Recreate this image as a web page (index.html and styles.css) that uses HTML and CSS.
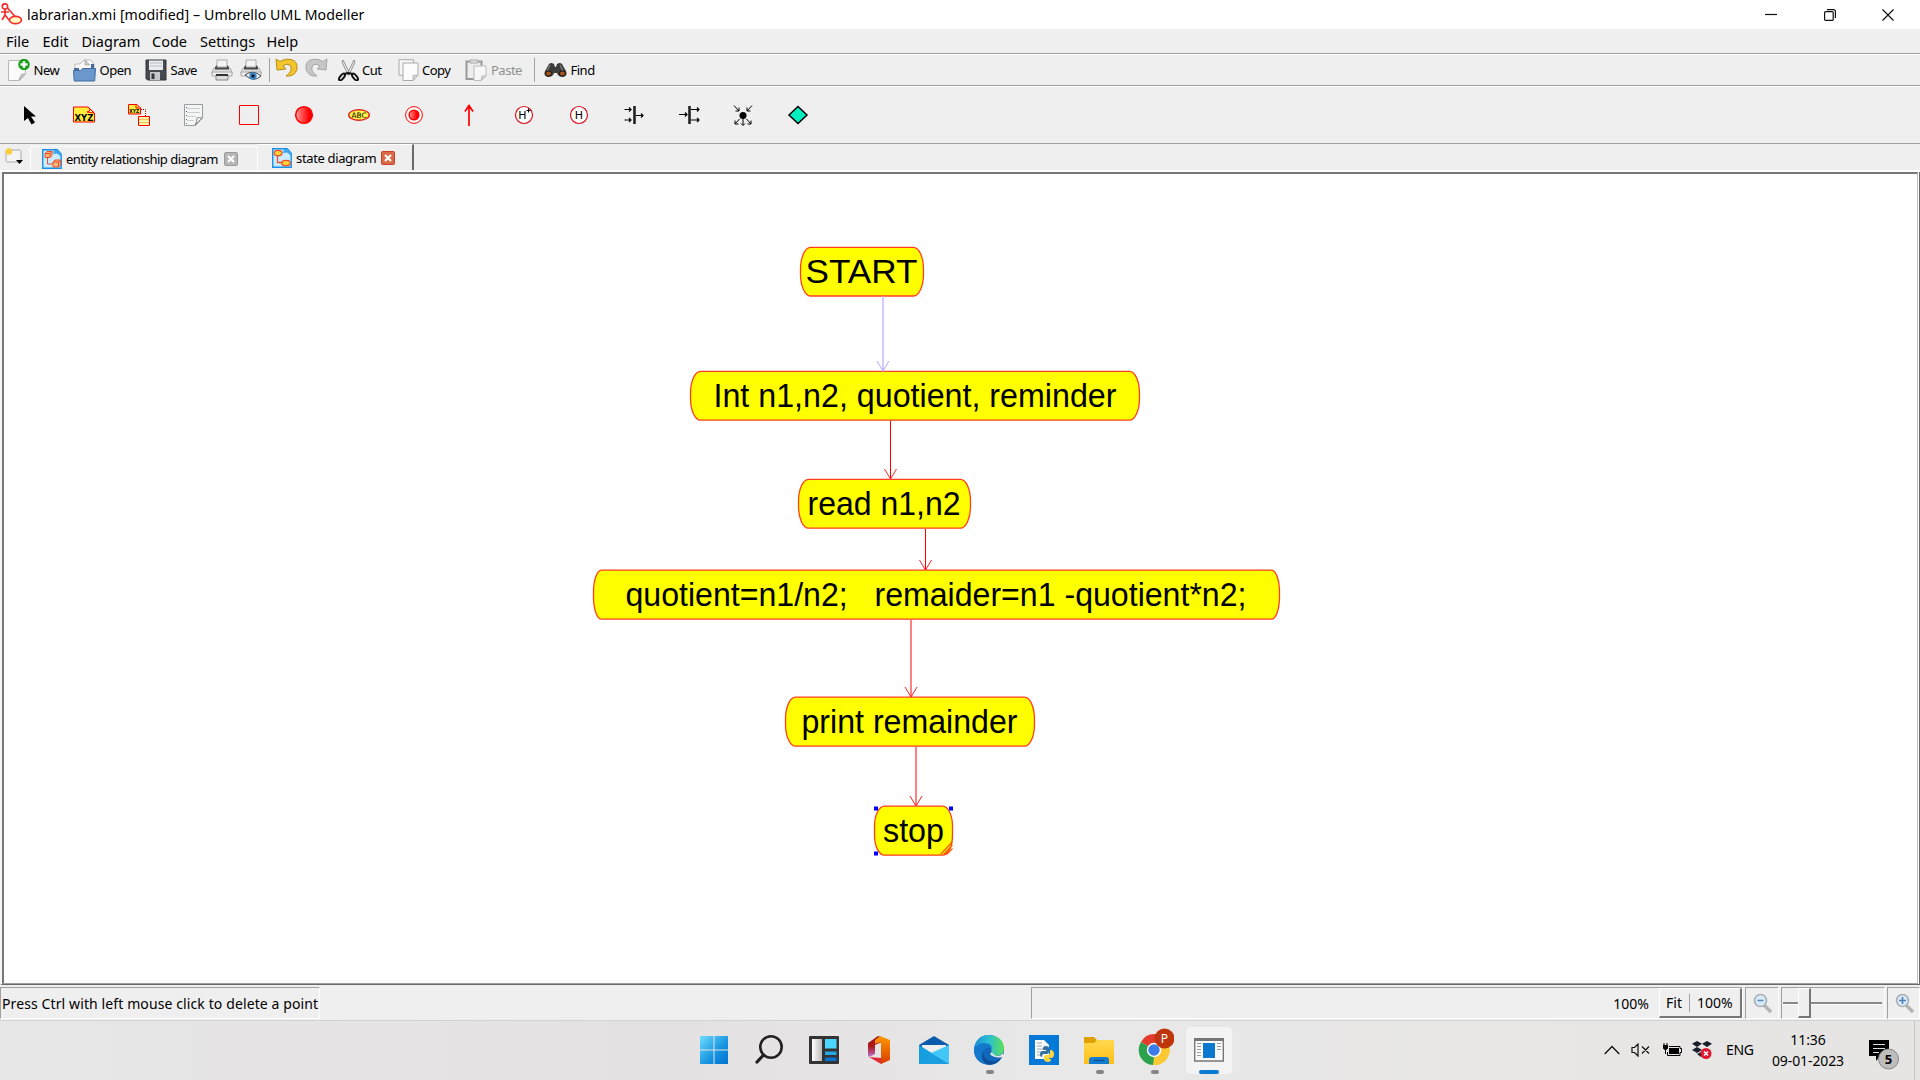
FILE: index.html
```html
<!DOCTYPE html>
<html lang="en">
<head>
<meta charset="utf-8">
<title>labrarian.xmi [modified] – Umbrello UML Modeller</title>
<link rel="stylesheet" href="styles.css">
</head>
<body>
<svg class="defs" width="0" height="0">
  <defs>
    <linearGradient id="redball" x1="0" x2="1"><stop offset="0" stop-color="#ffb0b0"/><stop offset=".25" stop-color="#ff6868"/><stop offset=".8" stop-color="#f00"/></linearGradient>
    <linearGradient id="win" x1="0" y1="0" x2="1" y2="1"><stop offset="0" stop-color="#6fdcff"/><stop offset=".6" stop-color="#1593e0"/><stop offset="1" stop-color="#0070cf"/></linearGradient>
    <linearGradient id="gold" x1="0" y1="0" x2="0" y2="1"><stop offset="0" stop-color="#ffd84d"/><stop offset="1" stop-color="#ffbf18"/></linearGradient>
    <linearGradient id="office" x1="0" y1="0" x2="0" y2="1"><stop offset="0" stop-color="#ff9a00"/><stop offset="1" stop-color="#d83b01"/></linearGradient>
    <linearGradient id="officeL" x1="0" y1="0" x2="0" y2="1"><stop offset="0" stop-color="#a61015"/><stop offset=".5" stop-color="#a81c1c"/><stop offset="1" stop-color="#c06fd0"/></linearGradient>
    <linearGradient id="edgeTop" x1="0" x2="1"><stop offset="0" stop-color="#1a8fd8"/><stop offset=".5" stop-color="#2cc0d0"/><stop offset="1" stop-color="#5fe055"/></linearGradient>
    <linearGradient id="panelW" x1="0" x2="1"><stop offset="0" stop-color="#fff"/><stop offset="1" stop-color="#bbb"/></linearGradient>
    <symbol id="diagramPage" viewBox="0 0 20 20"><path d="M.7.7h14.5l4 4.500v14H.7z" fill="#c9ebff" stroke="#1a8fe6" stroke-width="1.4"/><path d="M12 1l-1 4 4-.500 4 3V5l-3.500-4z" fill="#3ba7f2"/></symbol>
  </defs>
</svg>

<header class="titlebar">
  <svg class="app-icon" width="22" height="22" viewBox="0 0 22 22" fill="none" stroke="#f03030" stroke-width="1.7"><circle cx="4" cy="3.500" r="2.700"/><path d="M4 6v6L1 17M4 12l4 5M0 9h8M6.500 5l8 9"/><ellipse cx="14.500" cy="17" rx="6" ry="3.700" fill="#fffcc0"/></svg>
  <span class="title">labrarian.xmi [modified] – Umbrello UML Modeller</span>
  <div class="controls">
    <svg width="12" height="12"><path d="M0 5.500h12" stroke="#111" stroke-width="1.2"/></svg>
    <svg width="12" height="12" viewBox="0 0 12 12" fill="none" stroke="#111" stroke-width="1.2"><rect x=".6" y="2.600" width="8.600" height="8.800" rx="1"/><path d="M3 .6h6.400q2 0 2 2V9"/></svg>
    <svg width="12" height="12" viewBox="0 0 12 12"><path d="M.5.5l11 11M11.500.5l-11 11" stroke="#111" stroke-width="1.200"/></svg>
  </div>
</header>

<nav class="menubar"><span class="m-file">File</span><span class="m-edit">Edit</span><span class="m-diagram">Diagram</span><span class="m-code">Code</span><span class="m-settings">Settings</span><span class="m-help">Help</span></nav>

<div class="toolbar">
  <div class="tb new"><svg width="23" height="23" viewBox="0 0 23 23"><path d="M1.500 1.500h17V15l-6 6.500h-11z" fill="#fbfbfb" stroke="#b8b8b8"/><path d="M18 15q-4 0-4 1l-2 5z" fill="#ddd" stroke="#aaa"/><circle cx="17" cy="5.500" r="5.700" fill="#16a016"/><path d="M17 2v7M13.500 5.500h7" stroke="#fff" stroke-width="2.400"/></svg><span>New</span></div>
  <div class="tb open"><svg width="23" height="23" viewBox="0 0 23 23"><path d="M2 14V5h5L11 1h7l3 4v9z" fill="#fafafa" stroke="#bbb"/><path d="M1 9h5v5H1zM18 5h3v9h-3z" fill="#476c9b"/><path d="M12 1l5 5h-5z" fill="#ccc" stroke="#999" stroke-width=".6"/><path d="M.5 11.500h7l2-2h13l-.8 12.500h-20.500z" fill="#6b98cc" stroke="#416a9f"/></svg><span>Open</span></div>
  <div class="tb save"><svg width="22" height="22" viewBox="0 0 22 22"><path d="M1 1h20v20H2.500L1 19.500z" fill="#454a50" stroke="#303438"/><path d="M4 1.500h14V11H4z" fill="#e9edf0"/><path d="M5 4h12M5 7h12" stroke="#b9bdc2"/><path d="M5 13h10v8H5z" fill="#c4c7ca"/><path d="M6.500 14.500h3V20h-3z" fill="#34383d"/></svg><span>Save</span></div>
  <div class="tb print"><svg width="22" height="22" viewBox="0 0 22 22"><path d="M6 1h10v7H6z" fill="#f5f5f5" stroke="#aaa"/><path d="M3 9h16l2.500 5h-21z" fill="#ddd" stroke="#aaa"/><path d="M4 9.500q0-3 2-3v2h10v-2q2 0 2 3v1H4z" fill="#484848"/><path d="M1 13h20v4H1z" fill="#eee" stroke="#aaa"/><path d="M5 16h12v5H5z" fill="#ddd" stroke="#888"/><path d="M5 16h12" stroke="#333" stroke-width="2"/></svg></div>
  <div class="tb preview"><svg width="22" height="22" viewBox="0 0 22 22"><path d="M6 1h10v7H6z" fill="#f5f5f5" stroke="#aaa"/><path d="M3 9h16l2.500 5h-21z" fill="#ddd" stroke="#aaa"/><path d="M4 9.500q0-3 2-3v2h10v-2q2 0 2 3v1H4z" fill="#484848"/><path d="M1 13h20v4H1z" fill="#eee" stroke="#aaa"/><path d="M5 16q8-6 16 1-7 7-16-1z" fill="#eef6ff" stroke="#444"/><circle cx="13" cy="17" r="3.700" fill="#3b84c4"/><circle cx="13" cy="17" r="1.500" fill="#111"/></svg></div>
  <i class="vsep"></i>
  <div class="tb undo"><svg width="23" height="20" viewBox="0 0 23 20"><path d="M1 1l1 11 9-1-3-3q6-4 8 1 1 5-5 9 9 1 11-7 1-8-6-9.500-6-1.500-11 2z" fill="#f3c52d" stroke="#b98b13"/></svg></div>
  <div class="tb redo"><svg width="23" height="20" viewBox="0 0 23 20"><path d="M22 1l-1 11-9-1 3-3q-6-4-8 1-1 5 5 9-9 1-11-7Q0 3 7 1.500q6-1.500 11 2z" fill="#c7c7c7" stroke="#a7a7a7"/></svg></div>
  <div class="tb cut"><svg width="21" height="22" viewBox="0 0 21 22"><path d="M5 1l7 14-2 1L4 3zM16 1L9 15l2 1 6-13z" fill="#eee" stroke="#777" stroke-width=".8"/><g fill="none" stroke="#111" stroke-width="2"><ellipse cx="4" cy="18" rx="4" ry="1.800" transform="rotate(-50 4 18)"/><ellipse cx="17" cy="18" rx="4" ry="1.800" transform="rotate(50 17 18)"/><path d="M6 15l4-1 5 1"/></g></svg><span>Cut</span></div>
  <div class="tb copy"><svg width="21" height="22" viewBox="0 0 21 22"><path d="M1 .7h14.500v15.500H1z" fill="#f6f6f6" stroke="#aaa"/><path d="M5 4h15v12l-5 5.500H5z" fill="#fcfcfc" stroke="#aaa"/><path d="M20 16l-5 .5v5z" fill="#ddd" stroke="#aaa" stroke-width=".8"/></svg><span>Copy</span></div>
  <div class="tb paste"><svg width="23" height="22" viewBox="0 0 23 22"><path d="M1.500 2.500h15V20h-15z" fill="#eee" stroke="#999" stroke-width="2"/><path d="M5 1h8v3H5z" fill="#ddd" stroke="#aaa"/><path d="M9 7h12v10l-5 4.500H9z" fill="#f7f7f7" stroke="#bbb"/><path d="M21 17l-4 0-1 4z" fill="#ddd" stroke="#bbb"/></svg><span>Paste</span></div>
  <i class="vsep"></i>
  <div class="tb find"><svg width="23" height="16" viewBox="0 0 23 16"><path d="M5 2q2-2 5 0l1 3h1l1-3q3-2 5 0l4 7q2 5-3 6-5 0-6-4H10q-1 4-6 4-5-1-3-6z" fill="#3c3c3c"/><path d="M6 3l-3 6M16 3l3 6" stroke="#777" stroke-width="1.500"/><ellipse cx="4.600" cy="11.500" rx="3" ry="2.600" fill="#a5541e" stroke="#111"/><ellipse cx="18.400" cy="11.500" rx="3" ry="2.600" fill="#a5541e" stroke="#111"/></svg><span>Find</span></div>
</div>

<div class="toolbox">
  <div><svg viewBox="0 0 24 24"><path d="M7 3v15l4-3 3.500 6.500 3.500-2-4-6h5z" fill="#000"/></svg></div>
  <div><svg viewBox="0 0 24 24"><path d="M1.500 4H16l6.500 6v9H1.500z" fill="#ffee3b" stroke="red"/><path d="M16 4l2 2q0 3-3 3l7 1z" fill="#fff8a0" stroke="red"/><text x="12" y="17.500" class="ico-xyz" textLength="19" lengthAdjust="spacingAndGlyphs">XYZ</text></svg></div>
  <div><svg viewBox="0 0 24 24"><path d="M1.500 1.500H10l3.500 3.500v6h-12z" fill="#ffee3b" stroke="red"/><path d="M9 2v3h4" fill="none" stroke="red"/><text x="7.300" y="9.500" class="ico-xyz tiny" textLength="10" lengthAdjust="spacingAndGlyphs">XYZ</text><path d="M14 6.500h4.500V13" fill="none" stroke="#900" stroke-dasharray="1 1"/><path d="M11.500 13.500h11v9h-11z" fill="#fff6a0" stroke="red"/><path d="M12 16.500h10M12 19.500h10" stroke="#fb6"/></svg></div>
  <div><svg viewBox="0 0 24 24"><path d="M2.500 1.500h18V15l-7 7.500h-11z" fill="#f5f5f3" stroke="#999da2"/><path d="M20 15q-3-1-5 0 0 4-2 7z" fill="#fff" stroke="#888"/><path d="M5 5.500h13M5 9.500h13M5 13.500h9M5 17.500h7" stroke="#c9ced3"/><path d="M4.500 4v17" stroke="#567" stroke-dasharray="1 3"/></svg></div>
  <div><svg viewBox="0 0 24 24"><path d="M2.500 2.500h19v19h-19z" fill="none" stroke="red"/></svg></div>
  <div><svg viewBox="0 0 24 24"><circle cx="12" cy="12" r="8.300" fill="url(#redball)" stroke="red" stroke-width="1.600"/></svg></div>
  <div><svg viewBox="0 0 24 24"><ellipse cx="12" cy="12" rx="10.300" ry="5.300" fill="#fff24a" stroke="#e02020" stroke-width="1.400"/><text x="12" y="14.500" class="ico-abc" textLength="15" lengthAdjust="spacingAndGlyphs">ABC</text></svg></div>
  <div><svg viewBox="0 0 24 24"><circle cx="12" cy="12" r="8.400" fill="#fff" stroke="red"/><circle cx="12" cy="12" r="4.800" fill="url(#redball)" stroke="red" stroke-width="1.500"/></svg></div>
  <div><svg viewBox="0 0 24 24"><path d="M12 23V3M8 8.500L12 2.500l4 6" fill="none" stroke="red" stroke-width="1.700"/></svg></div>
  <div><svg viewBox="0 0 24 24"><circle cx="12" cy="12" r="8.500" fill="#fff" stroke="#d81020" stroke-width="1.200"/><text x="10.500" y="16" class="ico-h">H</text><path d="M16.500 5.500v4M14.500 7.500h4" stroke="#000"/></svg></div>
  <div><svg viewBox="0 0 24 24"><circle cx="12" cy="12" r="8.500" fill="#fff" stroke="#d81020" stroke-width="1.200"/><text x="12" y="16" class="ico-h">H</text></svg></div>
  <div><svg viewBox="0 0 24 24"><path d="M12.500 3v18" stroke="#222" stroke-width="2.600"/><path d="M2.500 6.500H9M7 4.500l2 2-2 2M2.500 17H9M7 15l2 2-2 2M14 12.500h7M19 10.500l2 2-2 2" fill="none" stroke="#000" stroke-width="1.200"/></svg></div>
  <div><svg viewBox="0 0 24 24"><path d="M12.500 3v18" stroke="#222" stroke-width="2.600"/><path d="M14 6.500h8M20 4.500l2 2-2 2M14 17h8M20 15l2 2-2 2M2 11.500h8M8 9.500l2 2-2 2" fill="none" stroke="#000" stroke-width="1.200"/></svg></div>
  <div><svg viewBox="0 0 24 24"><circle cx="12" cy="12.500" r="3.500"/><path d="M3 2.500L8 8M8 4.500V8H4.500M21 2.500L16 8M16 4.500V8h3.500M8.500 16L4 21M4 17.500V21h3.500M15.500 16l4.500 5M20 17.500V21h-3.500M12 16v6M10 20.500l2 2 2-2" fill="none" stroke="#000"/></svg></div>
  <div><svg viewBox="0 0 24 24"><path d="M12 3.500l9 8.500-9 8.500L3 12z" fill="#04efbe" stroke="#000" stroke-width="1.500"/></svg></div>
</div>

<div class="tabs">
  <svg class="newtab" width="19" height="17" viewBox="0 0 19 17"><rect x="1" y="2" width="15" height="12" rx="1.500" fill="#f4f4f4" stroke="#aaa"/><circle cx="4" cy="3.500" r="3.200" fill="#f9cf38"/><path d="M11 12h7l-3.500 4z"/></svg>
  <div class="tab first"><svg width="20" height="20" viewBox="0 0 20 20"><use href="#diagramPage"/><g fill="#ffb77b" stroke="#e75028"><path d="M3 4.500L5 2.500h5v4l-2 2H3zM11 13l2-2h5.500v5l-2 2H11zM3 4.500h5v4M8 4.500l2-2M11 13h5.500v5M16.500 13l2-2"/><path d="M5.500 9v6H11" fill="none"/></g></svg><span>entity relationship diagram</span><svg class="close" width="14" height="14" viewBox="0 0 14 14"><rect x=".5" y=".5" width="13" height="13" rx="1" fill="#b6b6b6" stroke="#999"/><path d="M4 4l6 6M10 4l-6 6" stroke="#fff" stroke-width="2.200"/></svg></div>
  <div class="tab active"><svg width="20" height="20" viewBox="0 0 20 20"><use href="#diagramPage"/><g fill="#ffd23c" stroke="#e75028" stroke-width="1.300"><ellipse cx="6" cy="5" rx="4" ry="2.700"/><ellipse cx="14" cy="15" rx="4.300" ry="2.700"/><path d="M5.500 8v6.500H10" fill="none"/></g></svg><span>state diagram</span><svg class="close" width="14" height="14" viewBox="0 0 14 14"><rect x=".5" y=".5" width="13" height="13" rx="1" fill="#da6a45" stroke="#c8402a"/><path d="M4 4l6 6M10 4l-6 6" stroke="#fff" stroke-width="2.200"/></svg></div>
</div>

<main class="frame">
  <svg class="diagram" width="1913" height="808" viewBox="4 174 1913 808">
    <g class="state">
      <rect x="800.500" y="246.800" width="123" height="48.700" rx="10" ry="22"/>
      <rect x="690.500" y="370.800" width="449" height="48.900" rx="10" ry="22"/>
      <rect x="798.500" y="478.800" width="172" height="48.900" rx="10" ry="22"/>
      <rect x="593.500" y="569.600" width="686" height="49" rx="8" ry="22"/>
      <rect x="785.500" y="696.700" width="249" height="49" rx="10" ry="22"/>
      <rect x="874.500" y="805.700" width="78" height="49" rx="10" ry="20"/>
    </g>
    <path class="link pale" d="M883 296v75"/><path class="head pale" d="M877 360.500l6 10 6-10"/>
    <path class="link" d="M890.500 420.500v58"/><path class="head" d="M884.500 468.500l6 10 6-10"/>
    <path class="link" d="M925.500 528.500v41"/><path class="head" d="M919.500 559.500l6 10 6-10"/>
    <path class="link soft" d="M911 619.500v77"/><path class="head" d="M905 686.500l6 10 6-10"/>
    <path class="link soft" d="M916 746.500v59"/><path class="head" d="M910 795.500l6 10 6-10"/>
    <g class="label">
      <text x="805.500" y="282.500" textLength="112" lengthAdjust="spacingAndGlyphs">START</text>
      <text x="713.500" y="406.500" textLength="403" lengthAdjust="spacingAndGlyphs">Int n1,n2, quotient, reminder</text>
      <text x="807.500" y="514.500" textLength="153" lengthAdjust="spacingAndGlyphs">read n1,n2</text>
      <text x="625.500" y="605.500" textLength="621" lengthAdjust="spacingAndGlyphs">quotient=n1/n2;   remaider=n1 -quotient*n2;</text>
      <text x="801.500" y="732.500" textLength="216" lengthAdjust="spacingAndGlyphs">print remainder</text>
      <text x="883" y="841.500" textLength="61" lengthAdjust="spacingAndGlyphs">stop</text>
    </g>
    <path d="M940.500 854l12-13M943.500 854l9-9.500M946.500 854l6-6" stroke="#ff5a00" stroke-width="1.200"/>
    <path d="M874 806h4v4h-4zM949 806h4v4h-4zM874 851h4v4h-4z" fill="#00f"/>
  </svg>
</main>

<footer class="statusbar">
  <div class="panel message"><span>Press Ctrl with left mouse click to delete a point</span></div>
  <div class="panel zoombox">
    <span class="zoomvalue">100%</span>
    <div class="fit"><span>Fit</span><i></i><span>100%</span></div>
  </div>
  <div class="panel zoomout"><svg width="20" height="21" viewBox="0 0 20 21"><path d="M11 12l7 7" stroke="#b4b4b4" stroke-width="3.600"/><circle cx="7.500" cy="7.500" r="6" fill="#d9ebf8" stroke="#aaaeb2" stroke-width="1.600"/><path d="M4.500 7.500h6" stroke="#5b8fc0" stroke-width="1.600"/></svg></div>
  <div class="panel slider"><b></b><i></i></div>
  <div class="panel zoomin"><svg width="20" height="21" viewBox="0 0 20 21"><path d="M11 12l7 7" stroke="#b4b4b4" stroke-width="3.600"/><circle cx="7.500" cy="7.500" r="6" fill="#d9ebf8" stroke="#aaaeb2" stroke-width="1.600"/><path d="M4 7.500h7M7.500 4v7" stroke="#4b80b4" stroke-width="1.600"/></svg></div>
</footer>

<div class="taskbar">
  <div class="apps">
    <div><svg width="30" height="30" viewBox="0 0 30 30"><path d="M1 1h13.500v13.500H1zM15.500 1H29v13.500H15.500zM1 15.500h13.500V29H1zM15.500 15.500H29V29H15.500z" fill="url(#win)"/></svg></div>
    <div><svg width="30" height="30" viewBox="0 0 30 30" fill="none" stroke="#222"><circle cx="17" cy="12" r="10.700" stroke-width="2.600"/><path d="M9.500 20L3 27" stroke-width="3.200" stroke-linecap="round"/></svg></div>
    <div><svg width="30" height="30" viewBox="0 0 30 30"><rect y="1" width="30" height="28" rx="1" fill="#333"/><path d="M3 4h10v22H3z" fill="url(#panelW)"/><path d="M16 4h11.500v9.500H16z" fill="#4cd6ff"/><path d="M16 16.500h11.500V20H16z" fill="#26a7e8"/><path d="M16 22.500h11.500V26H16z" fill="#0872d0"/></svg></div>
    <div><svg width="30" height="30" viewBox="0 0 30 30"><path d="M4 8l10-7 4 1v5l-7 3v9l-6 3q-1-1-1-3z" fill="url(#officeL)"/><path d="M16 1l10 4v20l-9 4V7l-6 2V5z" fill="url(#office)"/><path d="M5 22l12 1v6z" fill="#e12a38"/></svg></div>
    <div><svg width="30" height="30" viewBox="0 0 30 30"><path d="M0 10l15-9 15 9v2H0z" fill="#0b5aac"/><path d="M3 10h24v10H3z" fill="#eee"/><path d="M0 10l30 19H0z" fill="#159fe0"/><path d="M30 10v19L12 18z" fill="#43c7f7"/><path d="M0 29l12-11 18 11z" fill="#1a9ee0"/></svg></div>
    <div class="running"><svg width="30" height="30" viewBox="0 0 30 30"><circle cx="15" cy="15" r="15" fill="#1268bd"/><path d="M0 14Q2 0 15 0q14 1 15 13 0 8-9 8-5 0-5-2 3-2 1-6-2-4-7-3-7 1-10 4z" fill="url(#edgeTop)"/><path d="M0 14Q3 8 10 8q8 0 8 6-4-3-8 1-4 6 2 14Q0 27 0 14z" fill="#1479cc"/><path d="M10 15q-3 9 7 11 7 1 11-4-6 10-16 7-7-6-2-14z" fill="#0d4e98"/><path d="M16 19q3-2 1-5 1 6 6 7 4 0 6-3v4q-8 2-13-3z" fill="#e5e4e4"/></svg></div>
    <div><svg width="30" height="30" viewBox="0 0 30 30"><path d="M0 0h30v30H0z" fill="#0479d8"/><path d="M6 5h9l5 5v14H6z" fill="#fafafa"/><path d="M8 8h5M8 11h5M8 14h6M8 17h4M8 20h4" stroke="#9ab"/><path d="M14 13q0-2 3-2t3 2v4q0 2-2 2h-3q-2 0-2 3-2 0-2-3 0-3 3-3h3v-1h-3z" fill="#376f9f"/><path d="M21 15q4 0 4 4t-3 4h-2v1h2q0 3-3 3t-4-2v-3q0-2 2-2h2q2 0 2-3z" fill="#ffd53b"/></svg></div>
    <div class="running"><svg width="30" height="30" viewBox="0 0 30 30"><path d="M0 2h10l3 3-2 4H0z" fill="#dfa000"/><path d="M0 8h10l3-3h17v24H0z" fill="url(#gold)"/><path d="M5 29v-4q0-3 3-3h14q3 0 3 3v4z" fill="#117cd0"/><path d="M10 25.500h10" stroke="#0a4c8a" stroke-width="1.200"/></svg></div>
    <div class="running chrome"><svg width="38" height="38" viewBox="0 0 38 38"><path d="M18 22L5 14a15 15 0 0 1 27 1z" fill="#e33b2e"/><path d="M18 22L5 14a15 15 0 0 0 12 23l7-11z" fill="#2ca24c"/><path d="M19 22L17 37a15 15 0 0 0 15-22H19z" fill="#fcc934"/><circle cx="18" cy="22" r="7.200" fill="#fff"/><circle cx="18" cy="22" r="5.700" fill="#3a7cec"/><circle cx="28.500" cy="10.500" r="10" fill="#bd360c"/><text x="28.500" y="15" class="badge-letter">P</text></svg></div>
    <div class="current"><svg width="30" height="24" viewBox="0 0 30 24"><path d="M.7 1h28.600v22H.7z" fill="#fafafa" stroke="#777" stroke-width="1.400"/><path d="M0 0h30v3H0z" fill="#777"/><path d="M9 5h12v15H9z" fill="#0b79cd"/><path d="M3 5.500h4M3 8.500h4M3 11.500h4M3 14.500h4M3 17.500h4M23 5.500h4M23 8.500h4M23 11.500h4" stroke="#999"/></svg></div>
  </div>
  <div class="tray">
    <svg class="chev" width="16" height="10" viewBox="0 0 16 10"><path d="M.7 9L8 1.500 15.300 9" fill="none" stroke="#111" stroke-width="1.300"/></svg>
    <svg class="vol" width="19" height="14" viewBox="0 0 19 14" fill="none" stroke="#111" stroke-width="1.200"><path d="M1 4.500h2.500L7 1v12L3.500 9.500H1zM11 3.500l7 7M18 3.500l-7 7"/></svg>
    <svg class="bat" width="20" height="14" viewBox="0 0 20 14"><path d="M7 3.500h11v2h1.500v4H18v3H5.500V9" fill="none" stroke="#000"/><path d="M7 5h10v6H7zM1 2h5v3.500L4 7v4H3V7L1 5.500z"/><path d="M2 0v3M5 0v3" stroke="#000"/></svg>
    <svg class="drop" width="20" height="18" viewBox="0 0 20 18"><path d="M5 0l5 2.800L5 6 0 2.800zM15 0l5 2.800L15 6l-5-3.200zM5 6l5 3-5 3-5-3zM5 13l4-2 2 3-2 2z" fill="#181e2b"/><circle cx="14" cy="12.500" r="5.500" fill="#e01530"/><path d="M12 10.500l4 4M16 10.500l-4 4" stroke="#fff" stroke-width="1.500"/></svg>
    <span class="lang">ENG</span>
    <div class="clock"><span>11:36</span><span class="date">09-01-2023</span></div>
    <svg class="notif" width="31" height="31" viewBox="0 0 31 31"><path d="M0 1h20v16h-9l-4 5v-5H0z"/><path d="M4 5.500h12M4 9.500h12M4 13.500h6" stroke="#ddd" stroke-width="1.200"/><circle cx="19.500" cy="20" r="10" fill="#bdbdbd" stroke="#888"/><text x="19.500" y="24.500" class="notif-count">5</text></svg>
  </div>
</div>
</body>
</html>
```
FILE: styles.css
```css
* { box-sizing: border-box; }
body { margin: 0; width: 1920px; height: 1080px; overflow: hidden; display: flex; flex-direction: column; background: #efefef; color: #000; font-family: "Noto Sans", "Open Sans", sans-serif; font-size: 14px; }
svg { display: block; flex: none; }
.defs { position: absolute; }
span { white-space: nowrap; }

.titlebar { height: 29px; flex: none; display: flex; align-items: center; background: #fff; padding: 0 26px 0 1px; }
.app-icon { margin-top: -2px; }
.title { margin-left: 4px; font-size: 14.2px; letter-spacing: .06px; }
.controls { display: flex; gap: 46.500px; margin-left: auto; }

.menubar { height: 25px; flex: none; display: flex; align-items: center; padding-left: 6px; border-bottom: 1px solid #a0a0a0; font-size: 14.500px; }
.m-file { width: 36.500px; }
.m-edit { width: 39px; }
.m-diagram { width: 70.500px; }
.m-code { width: 48px; }
.m-settings { width: 66.500px; }

.toolbar { height: 32px; flex: none; display: flex; align-items: center; border-top: 1px solid #fff; border-bottom: 1px solid #a0a0a0; padding-left: 7px; font-size: 13px; letter-spacing: -.5px; }
.tb { display: flex; align-items: center; gap: 3.500px; flex: none; }
.new { width: 66px; }
.open { width: 72px; }
.save { width: 66px; }
.print, .preview { width: 29px; }
.vsep { width: 1px; height: 24px; background: #a0a0a0; }
.undo { margin-left: 5px; width: 30px; padding-bottom: 4px; }
.redo { width: 32.500px; padding-bottom: 4px; }
.cut { width: 60px; }
.copy { width: 67px; }
.paste { width: 69.500px; color: #909090; }
.find { margin-left: 9px; }

.toolbox { height: 58px; flex: none; display: flex; align-items: center; border-top: 1px solid #fff; border-bottom: 1px solid #a0a0a0; padding-left: 2px; }
.toolbox div { width: 54.930px; display: flex; justify-content: center; }
.toolbox svg { width: 24px; height: 24px; }
.ico-xyz { font: bold 9px "DejaVu Sans", sans-serif; text-anchor: middle; }
.tiny { font-size: 5.500px; }
.ico-abc { font: 7.500px "DejaVu Sans", sans-serif; text-anchor: middle; }
.ico-h { font: 11px "DejaVu Sans", sans-serif; text-anchor: middle; }

.tabs { height: 28px; flex: none; display: flex; align-items: flex-end; border-bottom: 2px solid #fff; font-size: 13px; letter-spacing: -.5px; }
.newtab { margin: 0 6px 5px 5px; }
.tab { display: flex; align-items: center; border-top: 1px solid #fff; }
.first { width: 228px; height: 24px; border-left: 1px solid #fff; border-right: 1px solid #fff; padding-left: 11px; }
.active { width: 156px; height: 26px; border-right: 2px solid #696969; padding-left: 14px; letter-spacing: -.35px; }
.tab span { margin-left: 4px; }
.close { margin-left: auto; }
.first .close { margin-right: 19px; }
.active .close { margin-right: 17px; }

.frame { height: 813px; flex: none; border-left: 2px solid #f5f5f5; border-right: 1px solid #696969; border-bottom: 1px solid #696969; background: #fff; }
.diagram { border-top: 2px solid #777; border-left: 2px solid #777; border-right: 1px solid #c0c0c0; border-bottom: 1px solid #a0a0a0; box-sizing: content-box; height: 809px; }
.state rect { fill: #ff0; stroke: #ff4020; stroke-width: 1.300; }
.link { stroke: #f00; stroke-width: 1; fill: none; }
.soft { stroke: #ff8080; stroke-width: 2; }
.head { stroke: #f22; fill: none; }
.pale { stroke: #b0a8ff; }
.link.pale { stroke: #d0ccff; stroke-width: 2; }
.label text { font: 33px "Liberation Sans", sans-serif; white-space: pre; }

.statusbar { height: 36px; flex: none; display: flex; align-items: flex-start; padding-top: 2px; border-bottom: 1px solid #d2d2d2; }
.panel { height: 32px; flex: none; border: 1px solid; border-color: #a0a0a0 #fff #fff #a0a0a0; display: flex; align-items: center; }
.message { width: 320px; padding-left: 1px; margin-right: 711px; letter-spacing: .11px; }
.zoombox { width: 712px; justify-content: flex-end; margin-right: 2px; font-size: 14px; }
.fit { width: 83px; height: 30px; margin-left: 10px; display: flex; align-items: center; gap: 7px; padding-left: 6px; border: 1px solid; border-color: #fff #777 #777 #fff; border-right-width: 2px; border-bottom-width: 2px; }
.fit i { width: 1px; height: 18px; background: #a0a0a0; }
.zoomout { width: 34px; padding-left: 7px; margin-right: 2px; }
.slider { width: 104px; padding-left: 1px; margin-right: 2px; position: relative; }
.slider b { width: 99px; height: 3px; border-top: 2px solid #888; border-bottom: 1px solid #fff; }
.slider i { position: absolute; left: 16px; top: 0; width: 13px; height: 30px; background: #efefef; border: 1px solid; border-color: #fff #777 #777 #fff; border-right-width: 2px; border-bottom-width: 2px; }
.zoomin { width: 33px; padding-left: 7px; }

.taskbar { flex: 1; display: flex; background: linear-gradient(90deg, #e8e7e7, #e3e1e1 35%, #e9e8e8 55%, #e6e5e4); padding-left: 686.500px; }
.apps { display: flex; padding-top: 5px; }
.apps > div { width: 55px; height: 49px; display: flex; align-items: center; justify-content: center; position: relative; padding-bottom: 1px; }
.running::after { content: ""; position: absolute; left: 24px; bottom: 1px; width: 8px; height: 4px; border-radius: 2px; background: #858585; }
.chrome svg { margin: -7px 0 0 1px; }
.apps .current { width: 48px; margin-left: 3px; background: #f4f3f3; border: 1px solid #e9e8e8; border-radius: 5px; }
.current::after { content: ""; position: absolute; left: 13px; bottom: 0; width: 20px; height: 4px; border-radius: 2px; background: #087bd4; }
.badge-letter { font: 12px "Noto Sans", sans-serif; fill: #fff; text-anchor: middle; }
.tray { width: 315px; margin-left: auto; margin-right: 5px; border-right: 1px solid #c5c5c5; display: flex; align-items: center; padding-bottom: 2px; }
.chev { margin-left: 4px; }
.vol { margin-left: 11px; }
.bat { margin-left: 12px; }
.drop { margin-left: 10px; }
.lang { margin-left: 14px; width: 44px; font-size: 14px; letter-spacing: -.3px; }
.clock { width: 76px; display: flex; flex-direction: column; align-items: center; line-height: 21px; font-size: 14px; letter-spacing: -.1px; }
.notif { margin-left: 23px; margin-top: 10px; }
.notif-count { font: bold 13px "Noto Sans", sans-serif; text-anchor: middle; }
```
